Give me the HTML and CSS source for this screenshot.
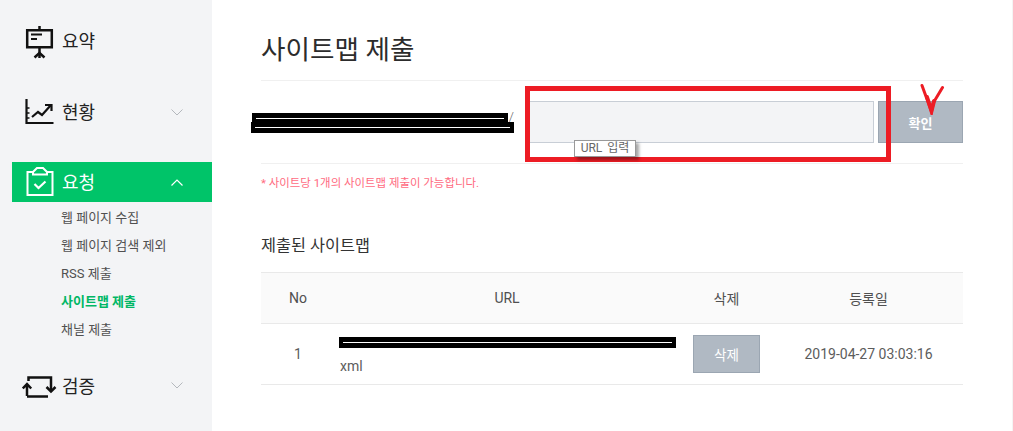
FILE: index.html
```html
<!DOCTYPE html>
<html lang="ko">
<head>
<meta charset="utf-8">
<title>사이트맵 제출</title>
<link rel="stylesheet" href="styles.css">
</head>
<body>
<div class="page">
  <aside class="sidebar">
    <nav class="nav">
      <div class="nav-row nav-first">
        <svg class="nav-icon" viewBox="0 0 40 40" fill="none" stroke="#111" stroke-width="2.500">
          <path d="M5.200 9.200h24.600v17h-24.600z"/><path d="M17.500 5v4M17.500 27v10"/><path d="M9 13.500h11M9 18h6" stroke-width="2"/><path d="M12.500 36.500l5-4.500 5 4.500"/>
        </svg>
        <span class="nav-label">요약</span>
      </div>
      <div class="nav-row nav-next">
        <svg class="nav-icon" viewBox="0 0 40 40" fill="none" stroke="#111" stroke-width="2.200">
          <path d="M4.500 7v24h27"/><path d="M5 16h2.500M5 21h2.500M5 26h2.500" stroke-width="1.500"/><path d="M10 25l6-5 4 3 9-10"/><path d="M23 13h6.500v6"/>
        </svg>
        <span class="nav-label">현황</span>
        <svg class="chev" viewBox="0 0 12 7" fill="none" stroke="#b4b8bd"><path d="M.5.500l5.500 5.500 5.500-5.500"/></svg>
      </div>
      <div class="nav-row nav-active">
        <svg class="nav-icon" viewBox="0 0 40 40" fill="none" stroke="#fff" stroke-width="2">
          <path d="M11 10H5.500V33H30.500V10H25"/><path d="M11 12.500V10l4-4h6l4 4v2.500z"/><path d="M12.500 22l4 4 7-6.500" stroke-width="2.200"/>
        </svg>
        <span class="nav-label">요청</span>
        <svg class="chev" viewBox="0 0 12 7" fill="none" stroke="#fff" stroke-width="1.200"><path d="M.5 6.500l5.500-5.500 5.500 5.500"/></svg>
      </div>
      <ul class="subnav">
        <li>웹 페이지 수집</li>
        <li>웹 페이지 검색 제외</li>
        <li>RSS 제출</li>
        <li class="sub-on">사이트맵 제출</li>
        <li>채널 제출</li>
      </ul>
      <div class="nav-row nav-last">
        <svg class="nav-icon" viewBox="0 0 40 40" fill="none" stroke="#111" stroke-width="2.500">
          <path d="M5 30V18M.8 22.500L5 18l4.200 4.500"/><path d="M5 30.500H26"/><path d="M6.500 15V11.500H29V25"/><path d="M24.500 21l4.500 4.500 4.500-4.500"/>
        </svg>
        <span class="nav-label">검증</span>
        <svg class="chev" viewBox="0 0 12 7" fill="none" stroke="#b4b8bd"><path d="M.5.500l5.500 5.500 5.500-5.500"/></svg>
      </div>
    </nav>
  </aside>
  <main class="main">
    <h1 class="title">사이트맵 제출</h1>
    <form class="submit-row">
      <span class="site">/</span>
      <div class="field"></div>
      <div class="btn btn-ok">확인</div>
    </form>
    <p class="note">* 사이트당 1개의 사이트맵 제출이 가능합니다.</p>
    <h2 class="sub-title">제출된 사이트맵</h2>
    <table class="list">
      <colgroup><col class="c-no"><col class="c-url"><col class="c-del"><col class="c-date"></colgroup>
      <thead>
        <tr><th>No</th><th>URL</th><th>삭제</th><th>등록일</th></tr>
      </thead>
      <tbody>
        <tr>
          <td>1</td>
          <td class="url"><span class="url-top"></span>xml</td>
          <td><span class="btn btn-del">삭제</span></td>
          <td>2019-04-27 03:03:16</td>
        </tr>
      </tbody>
    </table>
    <i class="bar bar-a"></i>
    <i class="bar bar-b"></i>
    <i class="bar bar-c"></i>
    <div class="red-box"></div>
    <div class="tooltip">URL 입력</div>
    <svg class="mark" viewBox="0 0 26 32" fill="none" stroke="#ed1c24" stroke-linecap="round"><path d="M3 2.500l9.500 26 2-9 9-15" stroke-width="3"/><path d="M8 14l4.500 14 2.500-10" stroke-width="4"/></svg>
  </main>
</div>
</body>
</html>
```
FILE: styles.css
```css
* { box-sizing: border-box; }
html, body { margin: 0; padding: 0; }
body {
  width: 1013px;
  height: 431px;
  overflow: hidden;
  background: #fff;
  font-family: Roboto, "Noto Sans CJK KR", sans-serif;
  font-weight: 300;
  color: #333;
}
.page { display: flex; height: 431px; border-right: 1px solid #f4f4f4; }
.sidebar { width: 212px; flex: none; background: #f3f4f6; padding-left: 12px; }
.nav { display: flex; flex-direction: column; }
.nav-row {
  height: 40px;
  display: flex;
  align-items: center;
  padding-left: 10px;
  color: #222;
}
.nav-first { margin-top: 21px; }
.nav-next { margin-top: 31px; }
.nav-active { margin-top: 30px; background: #00c469; color: #fff; }
.nav-last { margin-top: 21.500px; }
.nav-icon { width: 40px; height: 40px; flex: none; }
.nav-label { font-size: 18px; font-weight: 400; line-height: 40px; width: 109px; padding-top: 1px; height: 40px; }
.chev { width: 12px; height: 7px; flex: none; }
.subnav { list-style: none; margin: 1.500px 0 0; padding: 0 0 0 49px; font-size: 13px; font-weight: 400; color: #505050; }
.subnav li { height: 28.200px; line-height: 28.200px; white-space: nowrap; }
.subnav .sub-on { color: #00b765; font-weight: 700; }

.main { position: relative; flex: none; width: 702px; margin-left: 49px; }
.title {
  margin: 0;
  height: 81px;
  padding-top: 30px;
  font-size: 26.600px;
  line-height: 40px;
  font-weight: 400;
  color: #2c2c2c;
  border-bottom: 1px solid #f0f0f0;
}
.submit-row {
  height: 83px;
  display: flex;
  align-items: center;
  gap: 4px;
  border-bottom: 1px solid #f0f0f0;
  margin: 0;
}
.site { width: 263px; flex: none; text-align: right; padding-right: 10px; padding-bottom: 10px; font-size: 13px; color: #666; line-height: 14px; }
.field { width: 346px; height: 42px; background: #f3f4f6; border: 1px solid #c8ced6; }
.btn {
  display: flex;
  align-items: center;
  justify-content: center;
  background: #b0b9c3;
  border: 1px solid #9ba6b2;
  color: #fff;
  font-size: 13px;
  font-weight: 400;
}
.btn-ok { width: 85px; height: 42px; font-weight: 700; }
.note { margin: 0; padding-top: 10px; height: 64px; font-size: 11.450px; font-weight: 400; line-height: 18px; color: #ff6b7f; }
.sub-title { margin: 0; height: 44px; padding-top: 1px; font-size: 16.300px; line-height: 34px; font-weight: 400; color: #333; }
.list { width: 702px; border-collapse: collapse; table-layout: fixed; font-size: 14px; color: #5c5c5c; }
.c-no { width: 74px; }
.c-url { width: 344px; }
.c-del { width: 95px; }
.c-date { width: 189px; }
.list th {
  height: 51px;
  font-weight: 400;
  color: #505050;
  background: #fafafa;
  border-top: 1px solid #e9e9e9;
  border-bottom: 1px solid #e9e9e9;
  text-align: center;
  padding: 0;
}
.list td {
  height: 61px;
  text-align: center;
  padding: 0;
  border-bottom: 1px solid #e9e9e9;
  font-weight: 400;
}
.list td.url { text-align: left; padding: 0 0 0 5px; vertical-align: top; line-height: 18px; }
.url-top { display: block; height: 33px; }
.btn-del { width: 67px; height: 38px; margin: 0 auto; font-size: 13.500px; }

.bar { position: absolute; display: block; background: #000; }
.bar::after { content: ""; position: absolute; left: 4px; right: 4px; height: 1px; background: #fff; }
.bar-a { left: -9px; top: 113px; width: 256px; height: 10px; }
.bar-a::after { top: 5px; }
.bar-b { left: -10px; top: 122px; width: 263px; height: 11px; }
.bar-b::after { top: 5px; }
.bar-c { left: 78px; top: 337px; width: 337px; height: 11px; }
.bar-c::after { top: 5px; }
.red-box { position: absolute; left: 264px; top: 86px; width: 366px; height: 76px; border: 5px solid #ed1c24; }
.tooltip {
  position: absolute;
  left: 313px;
  top: 140px;
  width: 62px;
  height: 17px;
  background: #fff;
  border: 1px solid #999;
  box-shadow: 3px 3px 3px rgba(0,0,0,.35);
  font-size: 12px;
  font-weight: 400;
  word-spacing: 2px;
  line-height: 15px;
  text-align: center;
  color: #666;
}
.mark { position: absolute; left: 658px; top: 83px; width: 26px; height: 32px; }
```
